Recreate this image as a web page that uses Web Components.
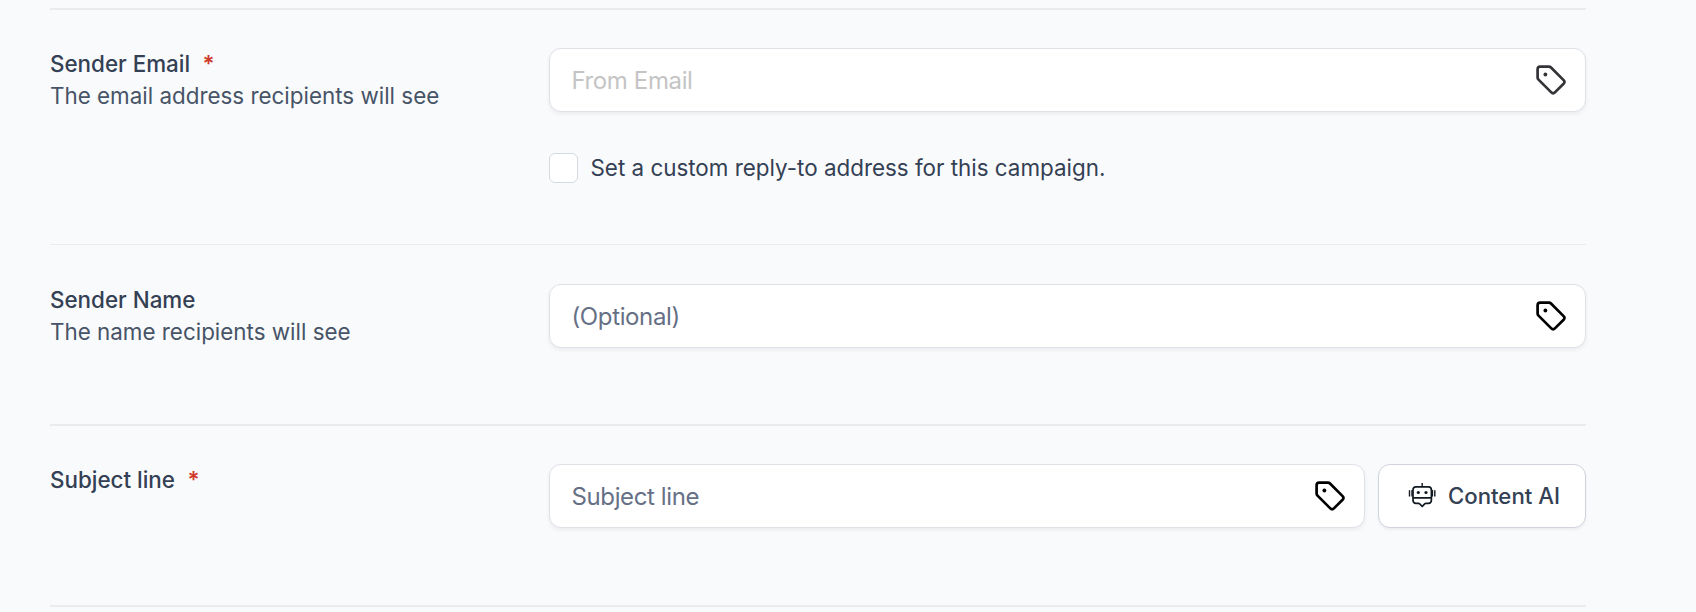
<!DOCTYPE html>
<html lang="en">
<head>
<meta charset="utf-8">
<title>Campaign settings</title>
<style>
    body {
        margin: 0;
        background: #f9fafc;
        color: #344054;
        font-family: Inter, "Liberation Sans", sans-serif;
        font-size: 22.4px;
        line-height: 32px;
    }
</style>
</head>
<body>
<campaign-form>
    <form-row label="Sender Email" required style="--row-height: 196px; --line: 1px">
        <span slot="hint">The email address recipients will see</span>
        <text-field disabled>From Email</text-field>
        <check-option>Set a custom reply-to address for this campaign.</check-option>
    </form-row>
    <form-row label="Sender Name" style="--row-height: 140px; --row-top: 39px">
        <span slot="hint">The name recipients will see</span>
        <text-field>(Optional)</text-field>
    </form-row>
    <form-row label="Subject line" required style="--row-height: 141px">
        <field-group>
            <text-field>Subject line</text-field>
            <ai-button>Content AI</ai-button>
        </field-group>
    </form-row>
</campaign-form>

<script>
function attach(element, html) {
    const template = document.createElement('template');
    template.innerHTML = html;
    element.attachShadow({ mode: 'open' }).appendChild(template.content.cloneNode(true));
}

class CampaignForm extends HTMLElement {
    constructor() {
        super();
        attach(this, `
            <style>
                :host {
                    display: block;
                    margin: 8px 110px 0 50px;
                    border-top: 2px solid #eaebef;
                }
            </style>
            <slot></slot>
        `);
    }
}

class FormRow extends HTMLElement {
    constructor() {
        super();
        attach(this, `
            <style>
                :host {
                    display: grid;
                    grid-template-columns: 499px 1fr;
                    height: var(--row-height);
                    padding-top: var(--row-top, 38px);
                    border-bottom: var(--line, 2px) solid #eaebef;
                }
                .title {
                    font-weight: 500;
                }
                .star {
                    color: #d03a2b;
                    font-weight: 600;
                    margin-left: 12.5px;
                }
                .hint {
                    color: #475467;
                }
                .fields {
                    display: flex;
                    flex-direction: column;
                    gap: 40px;
                }
            </style>
            <div>
                <div class="title"><span class="label"></span></div>
                <div class="hint"><slot name="hint"></slot></div>
            </div>
            <div class="fields"><slot></slot></div>
        `);
        this.shadowRoot.querySelector('.label').textContent = this.getAttribute('label');
        if (this.hasAttribute('required')) {
            const star = document.createElement('span');
            star.className = 'star';
            star.textContent = '*';
            this.shadowRoot.querySelector('.title').appendChild(star);
        }
    }
}

class TagIcon extends HTMLElement {
    constructor() {
        super();
        attach(this, `
            <style>
                :host { display: block; width: 31px; height: 31px; }
                svg { display: block; }
            </style>
            <svg width="31" height="31" viewBox="0 0 31 31" fill="none" stroke="currentColor" stroke-width="2.7" stroke-linejoin="round">
                <path d="M4.2 1.6H12.9Q14.1 1.6 15 2.5L27.6 15.1Q29.3 16.9 27.6 18.7L18.9 27.4Q17.1 29.2 15.3 27.4L2.5 14.6Q1.6 13.7 1.6 12.5V4.2Q1.6 1.6 4.2 1.6Z"/>
                <circle cx="9.4" cy="9.5" r="1.9" fill="currentColor" stroke="none"/>
            </svg>
        `);
    }
}

class TextField extends HTMLElement {
    constructor() {
        super();
        attach(this, `
            <style>
                :host {
                    display: flex;
                    flex: 0 0 64px;
                    align-items: center;
                    justify-content: space-between;
                    box-sizing: border-box;
                    height: 64px;
                    padding: 0 18px 0 21.5px;
                    background: #fff;
                    border: 1px solid #dfe1e6;
                    border-radius: 12px;
                    box-shadow: 0 2px 4px rgba(16, 24, 40, 0.06);
                    color: #667085;
                    font-size: 24px;
                    letter-spacing: -0.38px;
                }
                :host([disabled]) { color: #c4c4c4; }
                .value { padding-top: 2px; }
                tag-icon { color: #000; }
                :host([disabled]) tag-icon { color: #333338; }
            </style>
            <span class="value"><slot></slot></span>
            <tag-icon></tag-icon>
        `);
    }
}

class CheckOption extends HTMLElement {
    constructor() {
        super();
        attach(this, `
            <style>
                :host {
                    display: flex;
                    align-items: center;
                    gap: 12.5px;
                    height: 32px;
                }
                .box {
                    box-sizing: border-box;
                    width: 29px;
                    height: 30px;
                    background: #fff;
                    border: 1px solid #d5d9e2;
                    border-radius: 6px;
                }
            </style>
            <span class="box"></span>
            <span><slot></slot></span>
        `);
    }
}

class FieldGroup extends HTMLElement {
    constructor() {
        super();
        attach(this, `
            <style>
                :host { display: flex; gap: 13px; }
                ::slotted(text-field) { flex: 1 !important; }
            </style>
            <slot></slot>
        `);
    }
}

class AiButton extends HTMLElement {
    constructor() {
        super();
        attach(this, `
            <style>
                :host {
                    display: flex;
                    align-items: center;
                    gap: 10px;
                    box-sizing: border-box;
                    width: 208px;
                    height: 64px;
                    padding-left: 29px;
                    background: #fff;
                    border: 1px solid #d0d2dc;
                    border-radius: 12px;
                    box-shadow: 0 2px 3px rgba(16, 24, 40, 0.05);
                    font-size: 22.2px;
                    font-weight: 500;
                    white-space: nowrap;
                }
                svg { flex: none; }
            </style>
            <svg width="30" height="26" viewBox="0 0 30 26" fill="none" stroke="#101820" stroke-width="1.7" stroke-linejoin="round">
                <path d="M14.2 0V3.8M1.5 7.2V13.4M26.8 7.2V13.4M4 7V13.6M24.4 7V13.6" stroke-width="1.4"/>
                <path d="M8 3.9H20.4Q23.4 3.9 23.4 6.9V17Q23.4 20.3 20.4 20.4H18Q16.6 20.4 16 21.6L14.2 23.5L12.4 21.6Q11.8 20.4 10.4 20.4H8Q5 20.3 5 17V6.9Q5 3.9 8 3.9ZM5 14.8H23.4"/>
                <circle cx="10.3" cy="9.5" r="1.6" fill="#101820" stroke="none"/>
                <circle cx="18" cy="9.5" r="1.6" fill="#101820" stroke="none"/>
            </svg>
            <span><slot></slot></span>
        `);
    }
}

customElements.define('campaign-form', CampaignForm);
customElements.define('form-row', FormRow);
customElements.define('tag-icon', TagIcon);
customElements.define('text-field', TextField);
customElements.define('check-option', CheckOption);
customElements.define('field-group', FieldGroup);
customElements.define('ai-button', AiButton);
</script>
</body>
</html>
